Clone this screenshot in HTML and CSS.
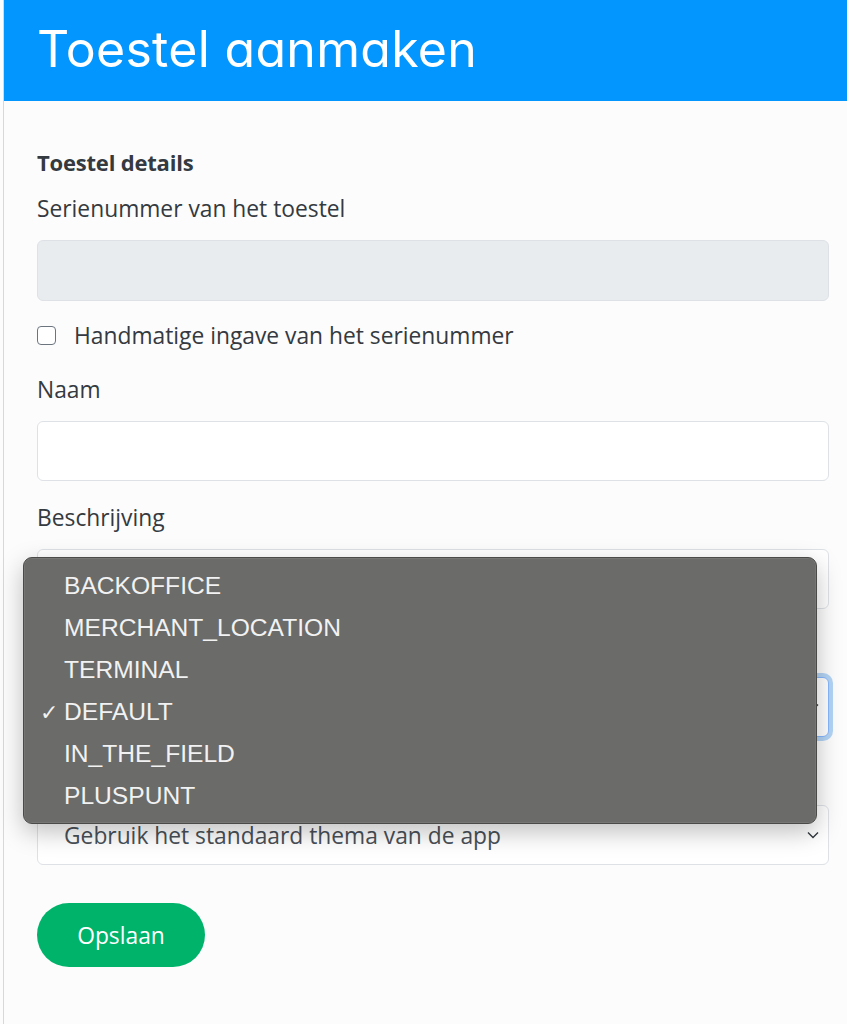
FILE: index.html
```html
<!DOCTYPE html>
<html lang="nl">
<head>
<meta charset="utf-8">
<title>Toestel aanmaken</title>
<link rel="stylesheet" href="styles.css">
</head>
<body>
<div class="page">
  <header class="topbar">
    <h1 class="title">Toestel aanmaken</h1>
  </header>
  <main class="form">
    <h5 class="section-title">Toestel details</h5>
    <div class="label label-first">Serienummer van het toestel</div>
    <div class="input input-disabled"></div>
    <div class="check-row">
      <span class="checkbox"></span>
      <span class="check-label">Handmatige ingave van het serienummer</span>
    </div>
    <div class="label">Naam</div>
    <div class="input"></div>
    <div class="label">Beschrijving</div>
    <div class="input"></div>
    <div class="label">Type</div>
    <div class="input select focused">
      <span class="select-value">DEFAULT</span>
      <svg class="chev" width="12" height="8" viewBox="0 0 12 8"><path d="M1 1.5 L6 6.5 L11 1.5" fill="none" stroke="#343a40" stroke-width="1.4"/></svg>
    </div>
    <div class="label">Thema</div>
    <div class="input select">
      <span class="select-value">Gebruik het standaard thema van de app</span>
      <svg class="chev" width="12" height="8" viewBox="0 0 12 8"><path d="M1 1.5 L6 6.5 L11 1.5" fill="none" stroke="#343a40" stroke-width="1.4"/></svg>
    </div>
    <button class="save">Opslaan</button>
  </main>
  <ul class="popup">
    <li class="opt">BACKOFFICE</li>
    <li class="opt">MERCHANT_LOCATION</li>
    <li class="opt">TERMINAL</li>
    <li class="opt selected"><span class="tick">✓</span>DEFAULT</li>
    <li class="opt">IN_THE_FIELD</li>
    <li class="opt">PLUSPUNT</li>
  </ul>
</div>
</body>
</html>
```
FILE: styles.css
```css
html, body {
  margin: 0;
  padding: 0;
  background: #fcfcfc;
}
body {
  padding-left: 3px;
  font-family: "Open Sans", "Noto Sans", sans-serif;
  color: #343a40;
}
.page {
  position: relative;
  border-left: 1px solid #d8d8d8;
  min-height: 1024px;
  box-sizing: border-box;
}
.topbar {
  background: #0496ff;
  height: 101px;
  display: flex;
  align-items: center;
  padding-left: 33px;
}
.title {
  margin: 0;
  font-family: "Inter", sans-serif;
  font-feature-settings: "cv11" 1;
  font-weight: 400;
  font-size: 50px;
  color: #ffffff;
  letter-spacing: 0.3px;
  line-height: 1;
  padding-bottom: 4px;
}
.form {
  padding: 45px 18px 40px 33px;
  display: flex;
  flex-direction: column;
  align-items: stretch;
}
.section-title {
  margin: 0;
  font-size: 22px;
  font-weight: 700;
  line-height: 33px;
  letter-spacing: -0.2px;
}
.label {
  font-size: 22.8px;
  line-height: 33px;
  margin-top: 20px;
  margin-bottom: 15px;
}
.label-first {
  margin-top: 13px;
}
.check-row + .label {
  margin-top: 21px;
}
.input {
  height: 60px;
  box-sizing: border-box;
  border: 1px solid #dee2e6;
  border-radius: 6px;
  background: #ffffff;
}
.input-disabled {
  background: #e9ecef;
  height: 61px;
}
.check-row {
  display: flex;
  align-items: center;
  margin-top: 18px;
  height: 33px;
}
.checkbox {
  width: 19px;
  height: 19px;
  box-sizing: border-box;
  border: 1.5px solid #6c757d;
  border-radius: 4px;
  background: #fff;
  margin-right: 18px;
}
.check-label {
  font-size: 22.8px;
}
.select {
  display: flex;
  align-items: center;
  justify-content: space-between;
  padding: 0 9px 0 26px;
}
.select-value {
  font-size: 22.8px;
  color: #495057;
}
.chev {
  display: block;
}
.focused {
  box-shadow: 0 0 0 4px #b3d4f5;
  border-color: #86b7fe;
}
.save {
  align-self: flex-start;
  margin-top: 38px;
  width: 168px;
  height: 64px;
  border: none;
  border-radius: 32px;
  background: #00b36b;
  color: #ffffff;
  font-family: "Open Sans", "Noto Sans", sans-serif;
  font-size: 22.8px;
  padding: 0;
}
.popup {
  position: absolute;
  left: 19px;
  top: 557px;
  width: 794px;
  height: 267px;
  box-sizing: border-box;
  margin: 0;
  padding: 7px 0 0 0;
  list-style: none;
  background: #6b6b69;
  border: 1px solid #4a4a48;
  border-radius: 9px;
  box-shadow: 0 0 0 0.5px rgba(255,255,255,0.15) inset, 0 8px 24px rgba(0,0,0,0.25);
}
.opt {
  position: relative;
  height: 42px;
  line-height: 42px;
  padding-left: 40px;
  font-family: "Liberation Sans", Arial, sans-serif;
  font-size: 24.6px;
  color: #f2f2f2;
}
.tick {
  position: absolute;
  left: 16px;
  top: 1px;
  font-family: "DejaVu Sans", sans-serif;
  font-size: 22px;
}
```
